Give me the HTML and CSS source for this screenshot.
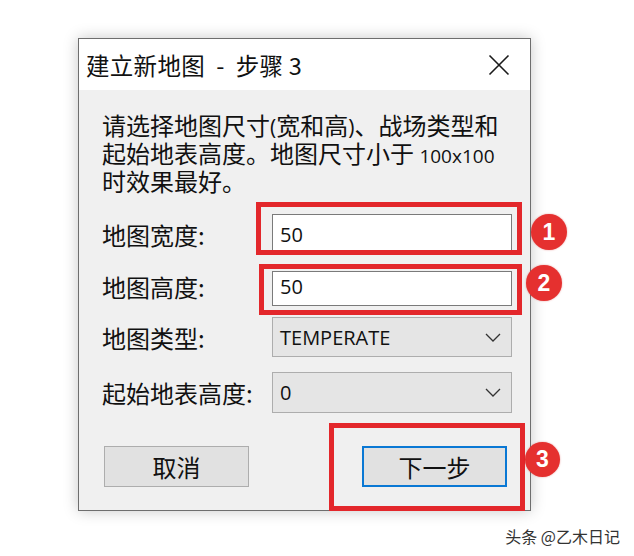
FILE: index.html
```html
<!DOCTYPE html>
<html lang="zh-CN">
<head>
<meta charset="utf-8">
<title>建立新地图 - 步骤 3</title>
<link rel="stylesheet" href="styles.css">
</head>
<body>
<div class="page">
  <div class="dialog">
    <div class="titlebar">
      <span class="title">建立新地图&nbsp; -&nbsp; 步骤 3</span>
      <svg class="close" width="22" height="22" viewBox="0 0 22 22"><path d="M1.5 1.5L20.5 20.5M20.5 1.5L1.5 20.5" stroke="#1a1a1a" stroke-width="1.6" fill="none"/></svg>
    </div>
    <div class="body">
      <div class="intro">
        <div class="line">请选择地图尺寸<span class="paren">(</span>宽和高<span class="paren">)</span>、战场类型和</div>
        <div class="line">起始地表高度。地图尺寸小于 <span class="lat">100x100</span></div>
        <div class="line">时效果最好。</div>
      </div>
      <div class="row row1">
        <span class="label">地图宽度:</span>
        <div class="field">50</div>
      </div>
      <div class="row row2">
        <span class="label">地图高度:</span>
        <div class="field">50</div>
      </div>
      <div class="row row3">
        <span class="label">地图类型:</span>
        <div class="combo"><span>TEMPERATE</span><svg width="16" height="9" viewBox="0 0 16 9"><path d="M1 1L8 8L15 1" stroke="#333" stroke-width="1.3" fill="none"/></svg></div>
      </div>
      <div class="row row4">
        <span class="label">起始地表高度:</span>
        <div class="combo"><span>0</span><svg width="16" height="9" viewBox="0 0 16 9"><path d="M1 1L8 8L15 1" stroke="#333" stroke-width="1.3" fill="none"/></svg></div>
      </div>
      <div class="buttons">
        <div class="btn">取消</div>
        <div class="btn primary">下一步</div>
      </div>
    </div>
    <div class="mark m1"></div>
    <div class="mark m2"></div>
    <div class="mark m3"></div>
    <div class="badge b1">1</div>
    <div class="badge b2">2</div>
    <div class="badge b3">3</div>
  </div>
  <div class="watermark">头条 @乙木日记</div>
</div>
</body>
</html>
```

FILE: styles.css
```css
* { box-sizing: border-box; }
html, body { margin: 0; padding: 0; background: #ffffff; }
body { width: 634px; height: 556px; overflow: hidden; font-family: "Noto Sans CJK SC", "Noto Sans", sans-serif; color: #111; }
.page { padding-top: 38px; padding-left: 78px; }
.dialog {
  position: relative;
  width: 453px;
  height: 473px;
  border: 1px solid #6e6e6e;
  background: #f0f0f0;
  box-shadow: 0 0 14px rgba(0,0,0,0.22);
  display: flex;
  flex-direction: column;
}
.titlebar {
  height: 51px;
  background: #ffffff;
  display: flex;
  align-items: center;
  justify-content: space-between;
  padding-left: 7px;
  padding-right: 20px;
}
.title { font-size: 23.5px; letter-spacing: 0.3px; color: #111; }
.close { display: block; }
.body { flex: 1; padding: 21px 0 0 23px; display: flex; flex-direction: column; }
.intro { font-size: 24px; color: #111; }
.line { height: 28px; line-height: 28px; white-space: nowrap; }
.paren { font-family: "Open Sans", "Noto Sans", sans-serif; font-size: 21px; }
.lat { font-family: "Open Sans", "Noto Sans", sans-serif; font-size: 19px; }
.row { display: flex; align-items: center; }
.row1 { margin-top: 19px; height: 40px; }
.row2 { margin-top: 17px; height: 35px; }
.row2 .label, .row2 .field { padding-bottom: 5px; }
.row3 { margin-top: 11px; height: 40px; }
.row4 { margin-top: 15px; height: 41px; }
.label { width: 170px; font-size: 24px; color: #111; }
.field, .combo {
  width: 240px;
  height: 100%;
  font-family: "Open Sans", "Noto Sans", sans-serif;
  font-size: 20px;
  color: #111;
  display: flex;
  align-items: center;
  padding-left: 7px;
}
.field { background: #ffffff; border: 1px solid #7a7a7a; }
.combo { background: #e5e5e5; border: 1px solid #adadad; justify-content: space-between; padding-right: 10px; }
.buttons { margin-top: 33px; display: flex; padding-left: 2px; }
.btn {
  width: 145px;
  height: 41px;
  background: #e1e1e1;
  border: 1px solid #adadad;
  display: flex;
  align-items: center;
  justify-content: center;
  font-size: 24px;
  color: #111;
}
.btn.primary { margin-left: 113px; border: 2px solid #0a78d4; }
.mark { position: absolute; border: 5px solid #e3272b; }
.m1 { left: 177px; top: 163px; width: 266px; height: 53px; }
.m2 { left: 180px; top: 225px; width: 263px; height: 51px; }
.m3 { left: 250px; top: 384px; width: 196px; height: 88px; }
.badge {
  position: absolute;
  width: 36px;
  height: 36px;
  border-radius: 50%;
  background: #e5302f;
  color: #fff;
  font-family: "Liberation Sans", Arial, sans-serif;
  font-weight: bold;
  font-size: 23px;
  display: flex;
  align-items: center;
  justify-content: center;
  box-shadow: 0 0 2px rgba(200,0,0,0.4);
}
.b1 { left: 452px; top: 175px; }
.b2 { left: 447px; top: 226px; }
.b3 { left: 446px; top: 403px; width: 35px; height: 35px; }
.watermark {
  margin-top: 13px;
  padding-right: 14px;
  text-align: right;
  font-size: 16px;
  color: #333;
  margin-left: -78px;
}
```
